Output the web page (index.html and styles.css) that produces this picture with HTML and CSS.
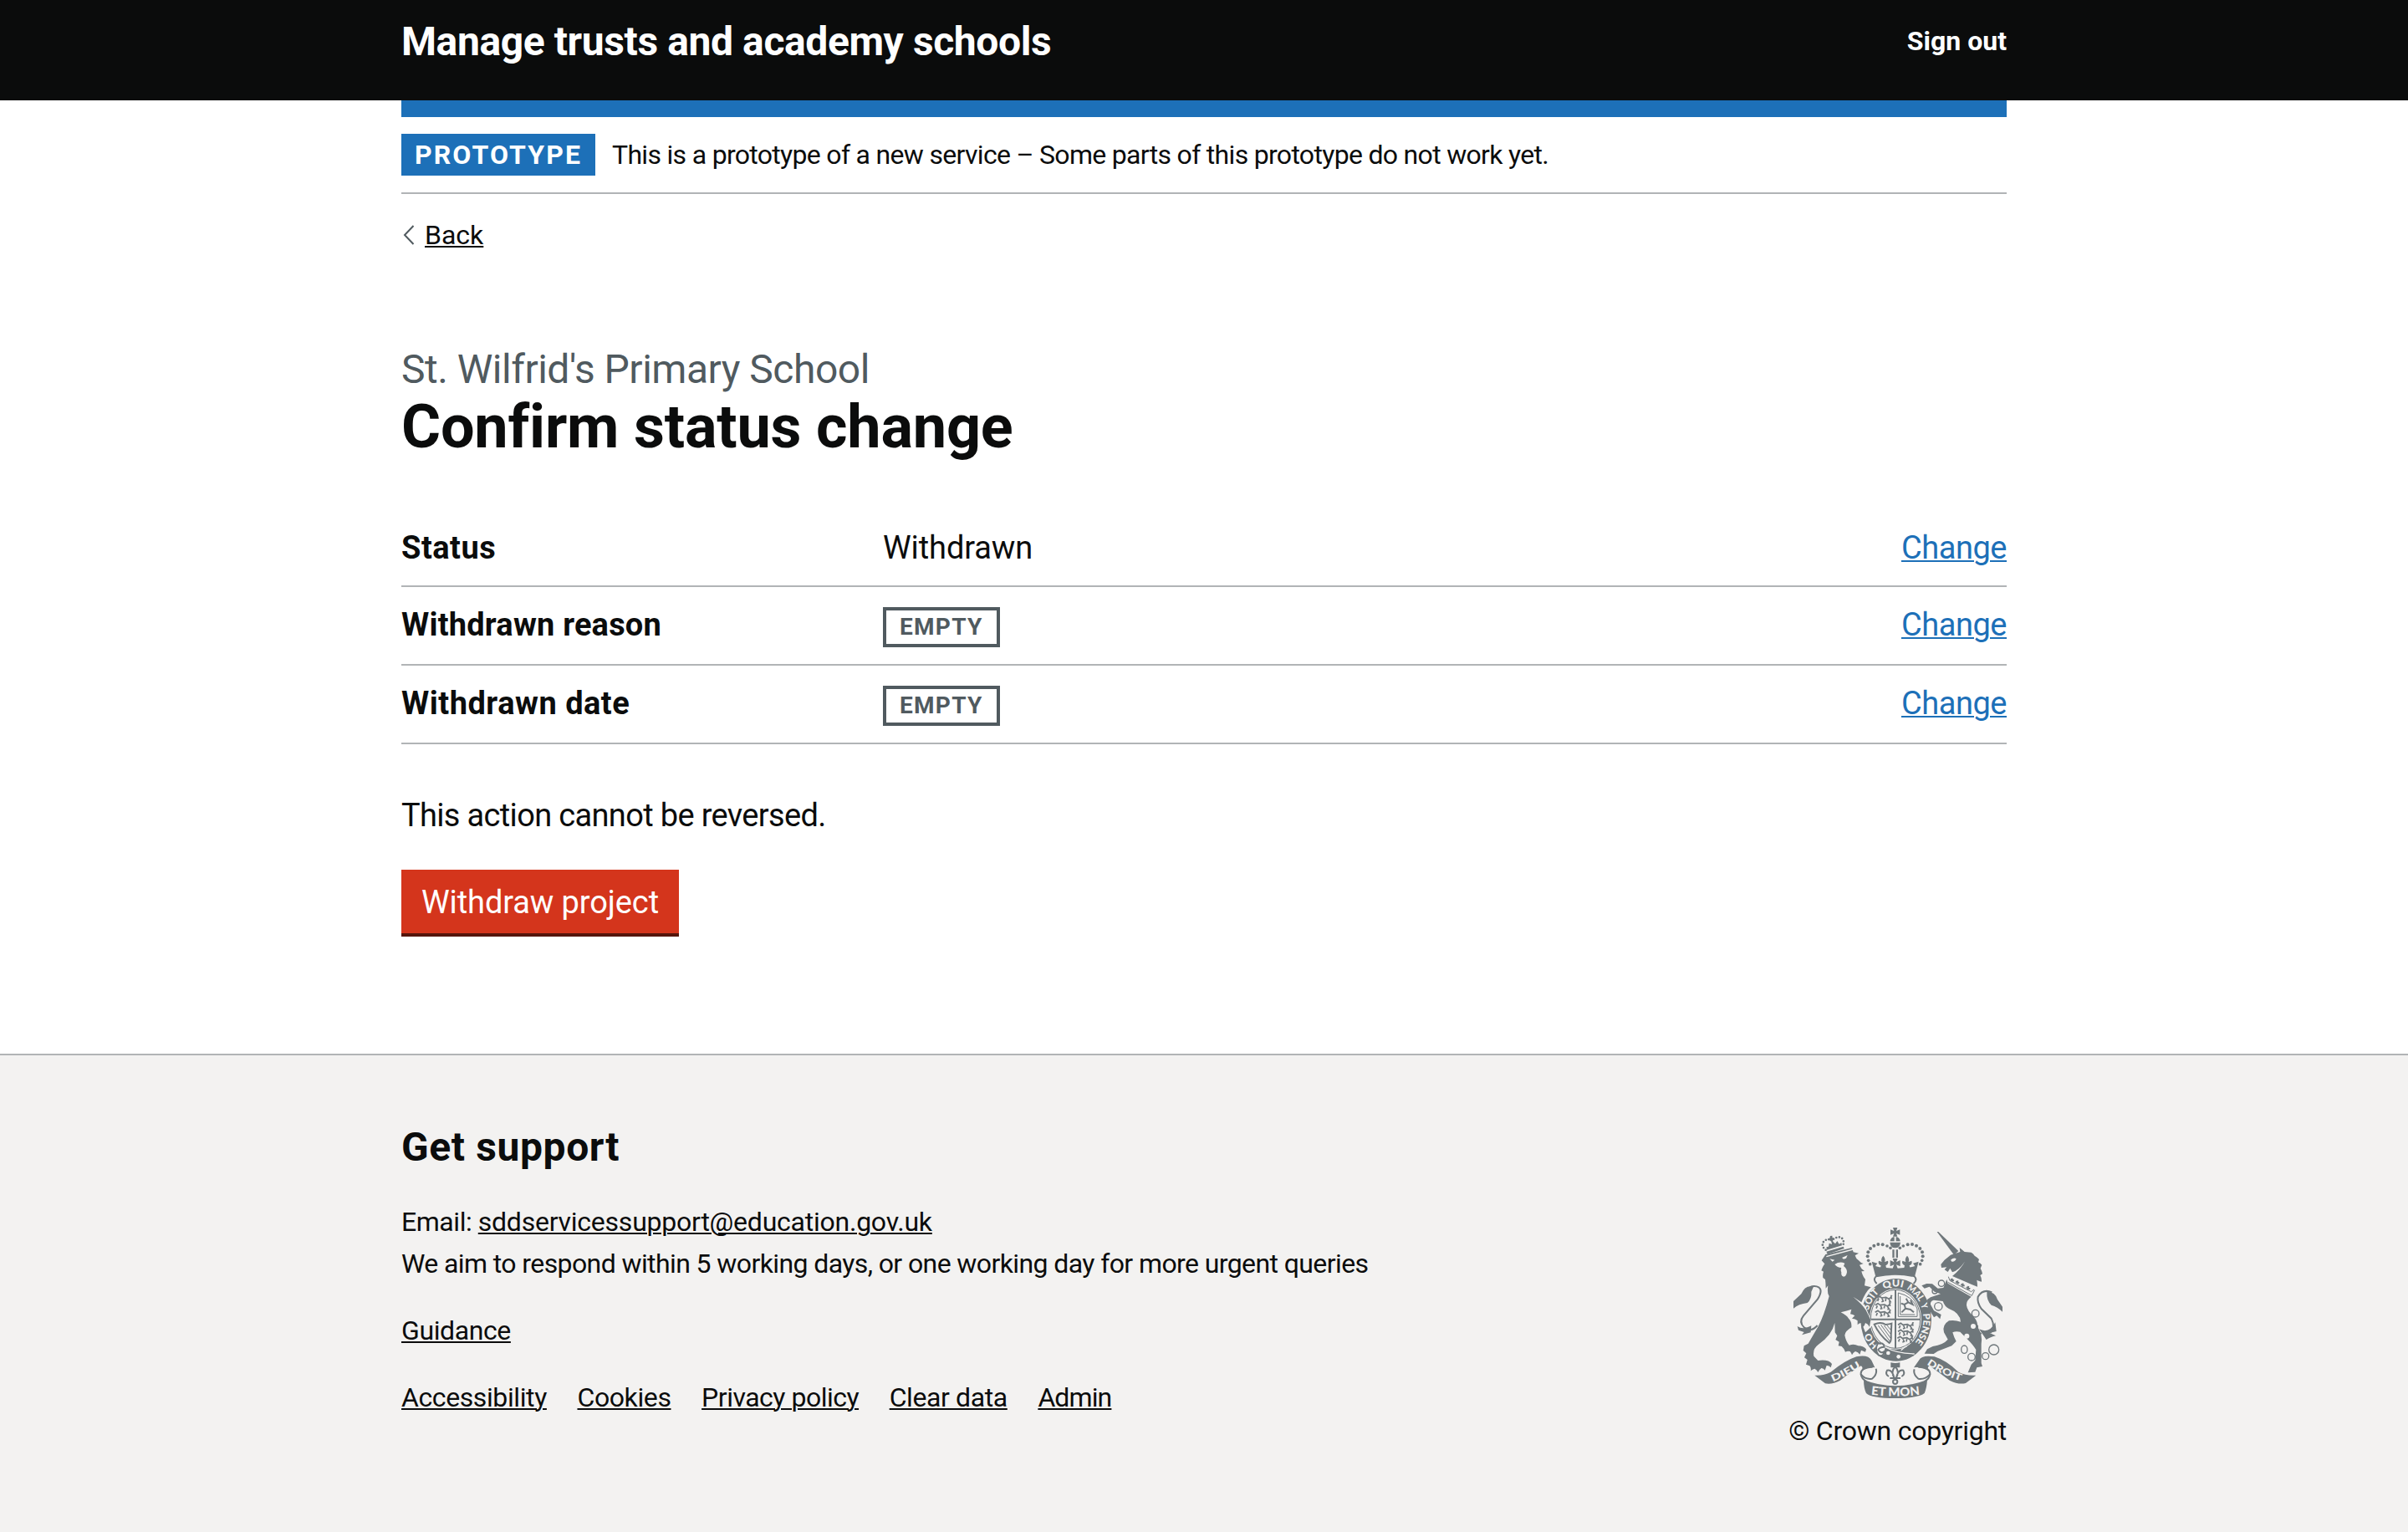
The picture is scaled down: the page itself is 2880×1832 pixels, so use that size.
FILE: index.html
```html
<!DOCTYPE html>
<html lang="en">
<head>
<meta charset="utf-8">
<title>Confirm status change - Manage trusts and academy schools</title>
<link rel="stylesheet" href="styles.css">
</head>
<body>
<header class="header">
  <div class="container header-inner">
    <span class="service-name">Manage trusts and academy schools</span>
    <a class="sign-out" href="#">Sign out</a>
  </div>
</header>

<div class="container">
  <div class="phase-banner">
    <strong class="phase-tag">PROTOTYPE</strong>
    <span class="phase-text">This is a prototype of a new service – Some parts of this prototype do not work yet.</span>
  </div>
  <a class="back-link" href="#"><svg class="chevron" viewBox="0 0 14 24" aria-hidden="true"><path d="M12.5 1L2 12L12.5 23"/></svg><span>Back</span></a>

  <main class="main">
    <span class="caption">St. Wilfrid's Primary School</span>
    <h1 class="title">Confirm status change</h1>
    <dl class="summary">
      <div class="row">
        <dt class="looser">Status</dt>
        <dd class="value">Withdrawn</dd>
        <dd><a class="change" href="#">Change</a></dd>
      </div>
      <div class="row">
        <dt>Withdrawn reason</dt>
        <dd class="value"><strong class="tag">EMPTY</strong></dd>
        <dd><a class="change" href="#">Change</a></dd>
      </div>
      <div class="row">
        <dt class="looser">Withdrawn date</dt>
        <dd class="value"><strong class="tag">EMPTY</strong></dd>
        <dd><a class="change" href="#">Change</a></dd>
      </div>
    </dl>
    <p class="body-text">This action cannot be reversed.</p>
    <button class="button" type="button">Withdraw project</button>
  </main>
</div>

<footer class="footer">
  <div class="container footer-inner">
    <div>
      <h2 class="support-title">Get support</h2>
      <p class="support-text"><span class="email-label">Email: </span><a class="email" href="#">sddservicessupport@education.gov.uk</a><br>We aim to respond within 5 working days, or one working day for more urgent queries</p>
      <div class="links"><a href="#">Guidance</a></div>
      <div class="links"><a href="#">Accessibility</a><a href="#">Cookies</a><a class="tight" href="#">Privacy policy</a><a href="#">Clear data</a><a class="tighter" href="#">Admin</a></div>
    </div>
    <div class="copyright">
<svg class="crest" viewBox="42 54 750 612" aria-hidden="true">
  <defs>
    <path id="garter" d="M408 499A100 117 0 0 1 408 265A100 117 0 0 1 408 499"/>
    <path id="left-scroll" d="M184 607Q232 586 286 551"/>
    <path id="mid-scroll" d="M316 653Q407 665 500 653"/>
    <path id="right-scroll" d="M520 544Q580 586 648 606"/>
    <g id="lions">
      <path class="line lion-line" d="M0 6L10 0L18 6L34 4L44 10L52 4M8 8L4 18M20 8L24 18L18 20M34 8L32 18M44 10L50 20L44 21M56 0Q50 -6 54 10"/>
    </g>
    <g id="side-crown">
      <circle cx="390" cy="127" r="5.5"/><circle cx="378" cy="120" r="5.5"/><circle cx="362" cy="115" r="6"/><circle cx="346" cy="114" r="6"/><circle cx="331" cy="119" r="6"/><circle cx="318" cy="129" r="6"/><circle cx="310" cy="142" r="6"/><circle cx="308" cy="157" r="6"/><circle cx="311" cy="172" r="5.5"/><circle cx="317" cy="185" r="5.5"/>
      <path d="M364 155Q374 166 369 177L381 173Q385 184 373 190L375 199H354L356 190Q344 185 348 173L359 177Q354 166 364 155Z"/>
      <path d="M323 176L343 182L336 192L350 196L408 201V222Q370 221 337 230Z"/>
    </g>
  </defs>

  <!-- royal crown -->
  <path d="M399 54H415L411 66L424 61V80L411 75L415 86H399L403 75L390 80V61L403 66Z"/>
  <path d="M404 88H400Q390 92 389 103H404ZM410 88H414Q424 92 425 103H410ZM388 107H426Q424 126 407 127Q390 126 388 107Z"/>
  <path d="M397 133H404V162H397ZM410 133H417V162H410Z"/>
  <path d="M398 165H416L411 178L425 171V193L411 187L417 203H397L403 187L389 193V171L403 178Z"/>
  <use href="#side-crown"/>
  <use href="#side-crown" transform="matrix(-1 0 0 1 814 0)"/>
  <path class="line" d="M341 255Q326 241 338 229Q407 213 476 229Q488 241 473 255"/>

  <!-- garter and shield -->
  <ellipse cx="410" cy="385" rx="127" ry="148"/>
  <ellipse class="paper" cx="408" cy="382" rx="93" ry="109"/>
  <ellipse class="line thin" cx="408" cy="382" rx="89" ry="105"/>
  <path d="M405 278H411V380H497V386H411V486H405V386H319V380H405Z"/>
  <use href="#lions" x="340" y="300"/><use href="#lions" x="335" y="326"/><use href="#lions" x="335" y="352"/>
  <use href="#lions" x="417" y="397"/><use href="#lions" x="417" y="421"/><use href="#lions" x="415" y="445"/>
  <path class="line thin" d="M418 288V373H486V345Q470 300 418 288M425 300V366H478"/>
  <path class="line" d="M430 358L444 344L440 330L454 322L446 308M444 344L462 348L474 358M454 322L470 330L462 314M440 330L428 326"/>
  <path class="line" d="M332 401Q355 390 373 402Q388 400 394 398L392 440Q394 462 386 468Q350 440 332 401Z"/>
  <path class="line thin" d="M346 405L388 462M356 403L390 450M367 405L391 436M378 405L392 422"/>
  <g class="motto">
    <text><textPath href="#garter" startOffset="66" textLength="56" lengthAdjust="spacingAndGlyphs">HO</textPath></text>
    <text><textPath href="#garter" startOffset="202" textLength="76" lengthAdjust="spacingAndGlyphs">SOIT</textPath></text>
    <text><textPath href="#garter" startOffset="298" textLength="70" lengthAdjust="spacingAndGlyphs">QUI</textPath></text>
    <text><textPath href="#garter" startOffset="382" textLength="66" lengthAdjust="spacingAndGlyphs">MAL</textPath></text>
    <text><textPath href="#garter" startOffset="458" textLength="20" lengthAdjust="spacingAndGlyphs">Y</textPath></text>
    <text><textPath href="#garter" startOffset="492" textLength="110" lengthAdjust="spacingAndGlyphs">PENSE</textPath></text>
  </g>
  <path class="paper" d="M345 470L372 478L372 510L350 515L338 492Z"/>
  <path class="line" d="M344 470Q366 464 368 482Q352 482 346 492Q356 508 368 498Q366 518 348 512Q332 494 344 470"/>
  <path d="M370 486L425 505L476 512Q440 532 400 530L366 514Z"/>
  <circle class="paper" cx="382" cy="504" r="7"/><circle class="paper" cx="419" cy="517" r="7"/>
  <path class="paper-line" d="M372 483Q410 505 476 507M428 494Q440 482 450 478"/>

  <!-- lion -->
  <path class="paper" d="M256 300L290 325Q275 360 288 400L300 430L326 405L318 380L300 335Z"/>
  <path d="M143 172L157 150L252 126L257 142L276 146L263 154Q266 166 276 172Q282 180 293 183L279 188Q284 202 297 210L286 211Q290 228 300 240L297 262L320 268Q300 285 286 322L256 302Q290 330 302 350L319 385L315 410Q310 400 300 396Q298 406 290 412L284 396Q276 397 272 403L272 388Q264 380 252 380L262 370Q256 366 246 364L250 347Q235 352 212 358Q232 368 240 380Q252 392 250 412Q228 425 226 440Q230 462 242 476Q260 470 274 478Q292 478 303 490Q302 496 300 500L285 494L280 509Q274 500 264 498Q256 502 252 511Q250 504 245 498Q236 496 228 500Q224 488 215 480L203 478L206 464L193 456L199 442L191 430L190 396Q180 440 130 475Q110 490 115 515L130 531Q168 526 180 543L176 556Q168 548 161 549L155 566Q150 558 142 558Q134 564 130 573Q126 564 118 560Q110 562 104 568Q106 556 100 550L87 545L92 528L81 520L88 505L77 495L80 478L95 470Q118 430 130 410Q152 370 170 300Q162 290 166 262L158 272Q158 255 156 240L148 234Q146 222 150 212L142 208Q146 195 154 184Z"/>
  <path class="paper" d="M172 166L190 170L182 176ZM216 162L236 153L231 164L222 167ZM190 186Q208 174 226 182L222 192Q234 200 234 214Q232 229 222 230Q212 228 214 214Q210 208 214 198Q200 198 190 186Z"/>
  <path class="paper-line" d="M160 158L256 132"/>
  <path class="line" d="M128 405Q104 432 80 412Q60 392 78 370L128 312Q148 280 134 269Q118 260 100 268"/>
  <path d="M114 266Q84 258 70 292L42 318V344Q60 328 92 324Q108 310 106 284ZM56 408Q78 422 106 406L104 430L72 439L80 429L60 422Z"/>
  <path d="M160 140L221 122L224 129L164 149ZM174 84L181 83L182 91L190 93L183 97L184 104L192 112L199 102L206 113L214 108L216 118L162 134L160 124L168 122L170 110L180 114L178 104L170 98Z"/>
  <path class="beads" d="M158 134Q140 120 150 105Q162 92 176 98M186 95Q206 82 218 94Q226 108 218 120"/>

  <!-- unicorn -->
  <path d="M557 69L562 69L634 138L618 152Z"/>
  <path d="M606 152L640 141L638 126L656 141L680 143Q688 148 692 155Q702 160 708 168L705 178Q714 182 718 188L713 200Q718 208 720 220L712 225Q718 236 717 248Q708 246 700 242Q702 254 702 266Q680 258 654 246L612 228Q640 205 657 176Q634 208 612 214L604 200L596 213L584 205L592 196L573 198L571 186L584 170Z"/>
  <path class="paper" d="M606 170Q618 160 626 166Q622 177 610 176Z"/>
  <path class="line thin" d="M598 230L603 244L680 284L690 276M596 250L682 298L692 278"/>
  <path class="line" d="M611 236V248M605 240L618 244M631 244L629 256M624 248L637 253M650 254L648 266M643 258L656 263M670 264L667 277M662 268L676 273"/>
  <path d="M592 240L596 254L680 302Q662 316 663 332Q665 352 690 375Q704 392 702 410Q722 440 716 472V540L720 552L700 556L694 572L668 574L680 545L694 530L697 492Q688 476 664 452L640 428Q624 424 613 430Q618 448 626 462L610 478L560 497L545 507L512 506L522 490L542 480Q580 474 596 455L582 430Q574 404 600 388Q620 384 642 392Q640 360 600 345Q585 338 578 318L545 314Q532 318 534 330L546 352L572 366L568 382L556 370L546 376L524 340L522 312L534 304L570 292L548 284L530 266L512 272L502 262L520 255L540 256L560 272L580 270Z"/>
  <path class="line" d="M716 436Q700 425 702 404M754 286Q722 272 704 302Q700 322 716 345L752 380Q768 412 748 432"/>
  <path d="M736 284Q766 284 774 312L792 338V356Q774 338 752 332Q734 314 736 284ZM766 394L770 426L746 432L768 442Q745 448 734 456L708 418Q745 436 766 394Z"/>
  <g class="chain">
    <circle cx="573" cy="254" r="11"/><circle cx="549" cy="282" r="9"/><circle cx="562" cy="337" r="14"/><circle cx="695" cy="362" r="13"/><ellipse cx="655" cy="491" rx="11" ry="14"/><circle cx="681" cy="518" r="13"/><circle cx="731" cy="515" r="12"/><circle cx="761" cy="492" r="18"/>
  </g>
  <circle class="paper" cx="687" cy="408" r="9"/><circle class="paper" cx="664" cy="443" r="9"/>

  <!-- scrolls and fleur-de-lis -->
  <path d="M118 584Q150 586 176 572Q228 530 268 517Q310 508 322 530L334 556Q310 552 286 570Q294 555 284 550Q240 578 210 602Q180 618 156 613Z"/>
  <path d="M697 584Q660 586 634 572Q590 530 548 517Q502 510 492 530L474 556Q505 552 528 570Q520 555 530 550Q570 578 602 602Q634 618 660 612Z"/>
  <path d="M294 600Q350 622 407 622Q464 622 522 600Q520 630 512 648Q490 666 407 666Q322 666 303 648Q294 630 294 600Z"/>
  <path class="line" d="M326 554Q282 556 284 580Q300 600 324 596Q344 580 338 560M490 554Q534 556 532 580Q514 600 490 596Q470 580 476 562"/>
  <path class="line" d="M284 580Q286 596 304 606M532 580Q530 596 512 606"/>
  <g class="motto">
    <text><textPath href="#left-scroll" textLength="114" lengthAdjust="spacingAndGlyphs">DIEU</textPath></text>
    <text class="large"><textPath href="#mid-scroll" startOffset="4" textLength="176" lengthAdjust="spacingAndGlyphs">ET MON</textPath></text>
    <text><textPath href="#right-scroll" textLength="136" lengthAdjust="spacingAndGlyphs">DROIT</textPath></text>
  </g>
  <path d="M391 538Q407 542 424 538V556H391Z"/>
  <path class="line" d="M407 552Q424 572 411 592Q418 562 436 566Q444 580 430 588M407 552Q390 572 403 592Q396 562 378 566Q370 580 384 588M388 594H426"/>
  <circle class="line" cx="407" cy="607" r="8"/>
</svg>
      <span class="copyright-text">© Crown copyright</span>
    </div>
  </div>
</footer>
</body>
</html>
```
FILE: styles.css
```css
* { box-sizing: border-box; }
body {
  margin: 0;
  min-height: 1832px;
  display: flex;
  flex-direction: column;
  background: #fff;
  color: #0b0c0c;
  font: 32px/40px Roboto, "Liberation Sans", sans-serif;
}
a {
  color: inherit;
  text-decoration: underline;
  text-decoration-thickness: 2px;
  text-underline-offset: 2px;
}
h1, h2, p, dl, dd { margin: 0; }
.container { width: 1920px; margin: 0 auto; }

.header { height: 120px; background: #0b0c0c; color: #fff; }
.header-inner { display: flex; justify-content: space-between; padding-top: 20px; }
.service-name { font-size: 48px; line-height: 60px; font-weight: 700; letter-spacing: -.4px; }
.sign-out { font-weight: 700; text-decoration: none; margin-top: 9px; }

.phase-banner {
  display: flex;
  gap: 20px;
  padding: 20px 0;
  border-top: 20px solid #1d70b8;
  border-bottom: 2px solid #b1b4b6;
  line-height: 50px;
}
.phase-tag { width: 232px; padding: 0 16px; background: #1d70b8; color: #fff; letter-spacing: 2.1px; white-space: nowrap; }
.phase-text { letter-spacing: -.69px; }

.back-link { display: flex; width: max-content; align-items: center; gap: 12px; padding-left: 2px; margin-top: 29px; text-decoration: none; }
.back-link span { text-decoration: underline; text-decoration-thickness: 2px; text-underline-offset: 2px; }
.chevron { width: 14px; height: 24px; fill: none; stroke: #505a5f; stroke-width: 2; }

.main { display: flex; flex-direction: column; align-items: flex-start; padding-top: 111px; }
.caption { font-size: 48px; line-height: 60px; letter-spacing: -.5px; color: #505a5f; }
.title { font-size: 72px; line-height: 80px; letter-spacing: -.2px; margin: -1px 0 59px; }

.summary { width: 100%; margin-bottom: 60px; font-size: 38px; line-height: 50px; }
.row { display: grid; grid-template-columns: 576px 1fr auto; padding: 20px 0; border-bottom: 2px solid #b1b4b6; }
dt { font-weight: 700; letter-spacing: .2px; }
.looser { letter-spacing: .5px; }
.value { display: flex; letter-spacing: -.1px; }
.tag {
  height: 48px;
  width: 140px;
  margin-top: 4px;
  padding: 0 16px;
  border: 4px solid #505a5f;
  color: #505a5f;
  font-size: 28px;
  line-height: 40px;
  letter-spacing: 1.3px;
}
.change { color: #1d70b8; letter-spacing: -.46px; }

.body-text { font-size: 38px; line-height: 50px; letter-spacing: -.66px; margin-bottom: 40px; }
.button {
  width: 332px;
  height: 80px;
  padding: 2px 0 0;
  border: 0;
  border-bottom: 4px solid #55150b;
  background: #d4351c;
  color: #fff;
  font: 38px/74px Roboto, "Liberation Sans", sans-serif;
  letter-spacing: -.1px;
}

.footer { flex: 1; margin-top: 140px; padding-top: 80px; border-top: 2px solid #b1b4b6; background: #f3f2f1; }
.footer-inner { display: flex; justify-content: space-between; }
.support-title { font-size: 48px; line-height: 60px; letter-spacing: .6px; margin-bottom: 34px; }
.support-text { line-height: 50px; letter-spacing: -.6px; }
.email-label { letter-spacing: -.45px; }
.email { letter-spacing: -.24px; }
.links { display: flex; gap: 36.6px; margin-top: 35px; letter-spacing: -.4px; }
.links + .links { margin-top: 40px; }
.tight { letter-spacing: -.5px; }
.tighter { letter-spacing: -.88px; }
.copyright { display: flex; flex-direction: column; align-items: center; padding-top: 126px; }
.copyright-text { margin-top: 19px; letter-spacing: -.25px; }

.crest { display: block; width: 250px; height: 204px; fill: #6f777b; }
.paper { fill: #f3f2f1; }
.paper-line { fill: none; stroke: #f3f2f1; stroke-width: 4; }
.line { fill: none; stroke: #6f777b; stroke-width: 6; }
.line.thin { stroke-width: 3; }
.lion-line { stroke-width: 5; }
.beads { fill: none; stroke: #6f777b; stroke-width: 8; stroke-linecap: round; stroke-dasharray: 0 11; }
.chain { fill: none; stroke: #6f777b; stroke-width: 4; }
.motto { fill: #f3f2f1; font: 900 34px Lato, sans-serif; letter-spacing: 0; }
.large { font-size: 43px; }
```
